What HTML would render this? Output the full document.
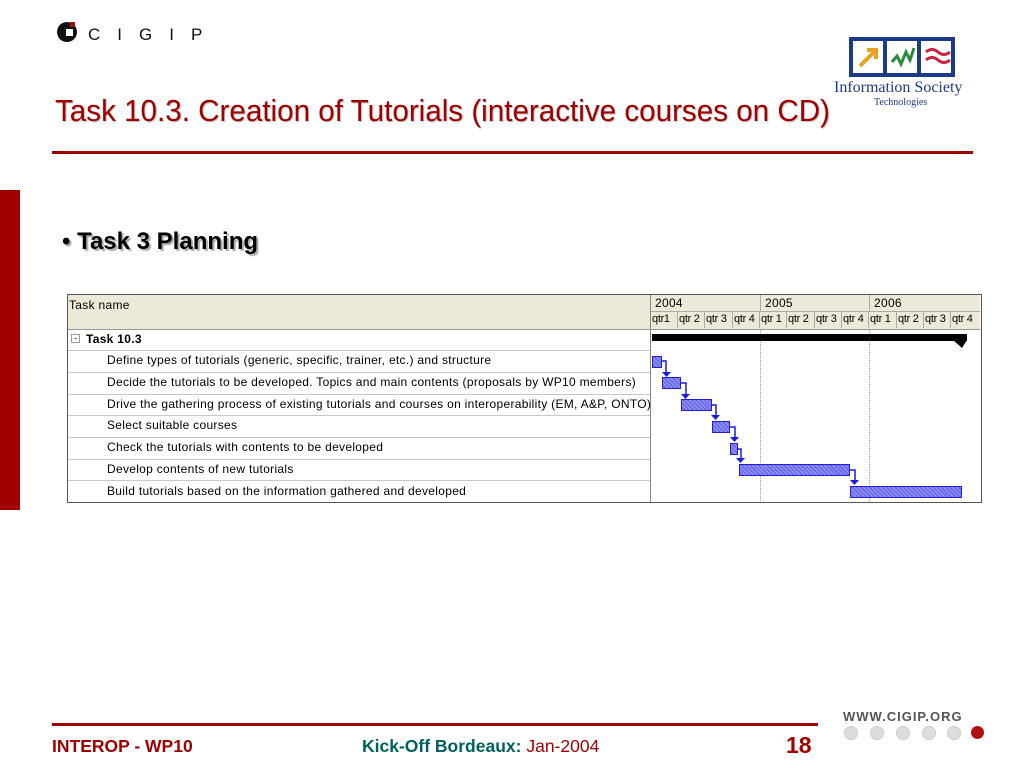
<!DOCTYPE html>
<html><head><meta charset="utf-8"><style>
body{margin:0;width:1024px;height:768px;background:#fff;position:relative;overflow:hidden;font-family:"Liberation Sans",sans-serif}
.a{position:absolute}
.t{font-family:"Liberation Sans",sans-serif;font-size:12px;letter-spacing:0.3px;color:#000;white-space:nowrap}
.q{position:absolute;top:312px;width:26px;height:16px;border-left:1px solid #aaa;font-size:11px;line-height:15px;text-align:left;padding-left:1px;white-space:nowrap;letter-spacing:-0.3px}
.row{position:absolute;left:68px;width:582px;height:21px;border-bottom:1px solid #c8c8c8}
.bar{position:absolute;height:10px;background:#6a6af0;border:1px solid #2020d0;background-image:repeating-linear-gradient(45deg,rgba(255,255,255,.35) 0 1px,transparent 1px 3px)}
</style></head><body>
<div class="a" style="left:57px;top:22px;width:20px;height:20px;border-radius:50%;background:#111"></div>
<div class="a" style="left:66px;top:29px;width:7px;height:7px;background:#fff"></div>
<div class="a" style="left:70px;top:22px;width:5px;height:5px;background:#a01010"></div>
<div class="a" style="left:88px;top:25px;font-size:17px;letter-spacing:17px;color:#111">CIGIP</div>
<svg class="a" style="left:848px;top:36px" width="108" height="44">
<rect x="3" y="3" width="34" height="36" fill="#fff" stroke="#1b3a8a" stroke-width="4"/>
<rect x="37" y="3" width="34" height="36" fill="#fff" stroke="#1b3a8a" stroke-width="4"/>
<rect x="71" y="3" width="34" height="36" fill="#fff" stroke="#1b3a8a" stroke-width="4"/>
<path d="M12 30 L27 15 M19 14 L28 14 L28 23" stroke="#e8a020" stroke-width="4" fill="none"/>
<path d="M44 26 L49 20 L53 28 L58 16 L62 24 L66 12" stroke="#2a8a3a" stroke-width="3" fill="none"/>
<path d="M78 16 q6 -5 12 0 t12 0 M78 24 q6 -5 12 0 t12 0" stroke="#d02040" stroke-width="3" fill="none"/>
</svg>
<div class="a" style="left:834px;top:79px;font-family:'Liberation Serif',serif;font-size:16px;color:#1b3a8a">Information Society</div>
<div class="a" style="left:874px;top:97px;font-family:'Liberation Serif',serif;font-size:10px;color:#1b3a8a">Technologies</div>
<div class="a" style="left:55px;top:93px;font-size:31px;color:#a00000;text-shadow:1px 1px 1px #bbb;white-space:nowrap;transform:scaleX(0.955);transform-origin:0 0">Task 10.3. Creation of Tutorials (interactive courses on CD)</div>
<div class="a" style="left:52px;top:151px;width:921px;height:3px;background:#a00000"></div>
<div class="a" style="left:0;top:190px;width:20px;height:320px;background:#a00000"></div>
<div class="a" style="left:62px;top:228px;font-size:24px;font-weight:bold;color:#000;text-shadow:2px 2px 1px #aaa">• Task 3 Planning</div>
<div class="a" style="left:67px;top:294px;width:913px;height:207px;border:1px solid #555;background:#fff"></div>
<div class="a" style="left:68px;top:295px;width:912px;height:34px;background:#ece9d8;border-bottom:1px solid #999"></div>
<div class="a t" style="left:69px;top:298px">Task name</div>
<div class="a" style="left:650px;top:295px;width:1px;height:207px;background:#888"></div>
<div class="a" style="left:651px;top:311px;width:329px;height:1px;background:#aaa"></div>
<div class="a" style="left:760px;top:295px;width:1px;height:17px;background:#aaa"></div>
<div class="a" style="left:869px;top:295px;width:1px;height:17px;background:#aaa"></div>
<div class="a t" style="left:655px;top:296px">2004</div>
<div class="a t" style="left:765px;top:296px">2005</div>
<div class="a t" style="left:874px;top:296px">2006</div>
<div class="q" style="left:651px;border-left:none">qtr1</div>
<div class="q" style="left:677px">qtr 2</div>
<div class="q" style="left:704px">qtr 3</div>
<div class="q" style="left:732px">qtr 4</div>
<div class="q" style="left:759px">qtr 1</div>
<div class="q" style="left:786px">qtr 2</div>
<div class="q" style="left:814px">qtr 3</div>
<div class="q" style="left:841px">qtr 4</div>
<div class="q" style="left:868px">qtr 1</div>
<div class="q" style="left:896px">qtr 2</div>
<div class="q" style="left:923px">qtr 3</div>
<div class="q" style="left:950px;width:28px">qtr 4</div>
<div class="a" style="left:760px;top:329px;height:172px;border-left:1px dotted #999"></div>
<div class="a" style="left:869px;top:329px;height:172px;border-left:1px dotted #999"></div>
<div class="row" style="top:329px"></div>
<div class="row" style="top:351px"></div>
<div class="row" style="top:373px"></div>
<div class="row" style="top:394px"></div>
<div class="row" style="top:416px"></div>
<div class="row" style="top:438px"></div>
<div class="row" style="top:459px"></div>
<div class="a" style="left:71px;top:334px;width:7px;height:7px;border:1px solid #999;font-size:9px;line-height:6px;text-align:center">-</div>
<div class="a t" style="left:86px;top:332px;font-weight:bold">Task 10.3</div>
<div class="a t" style="left:107px;top:353px">Define types of tutorials (generic, specific, trainer, etc.) and structure</div>
<div class="a t" style="left:107px;top:375px">Decide the tutorials to be developed. Topics and main contents (proposals by WP10 members)</div>
<div class="a t" style="left:107px;top:397px">Drive the gathering process of existing tutorials and courses on interoperability (EM, A&amp;P, ONTO)</div>
<div class="a t" style="left:107px;top:418px">Select suitable courses</div>
<div class="a t" style="left:107px;top:440px">Check the tutorials with contents to be developed</div>
<div class="a t" style="left:107px;top:462px">Develop contents of new tutorials</div>
<div class="a t" style="left:107px;top:484px">Build tutorials based on the information gathered and developed</div>
<div class="a" style="left:652px;top:334px;width:315px;height:7px;background:#000"></div>
<svg class="a" style="left:650px;top:329px" width="330" height="175">
<path d="M303 11 L317 11 L312 19 Z" fill="#000"/>
<g stroke="#1a1ae0" stroke-width="1.5" fill="none">
<path d="M11 32 H16 V44"/><path d="M30 54 H36 V66"/><path d="M61 76 H66 V87"/><path d="M79 98 H85 V109"/><path d="M87 120 H91 V130"/><path d="M199 141 H205 V152"/>
</g>
<g fill="#1a1ae0">
<path d="M12 43 h9 l-4.5 5z"/><path d="M31 65 h9 l-4.5 5z"/><path d="M61 86 h9 l-4.5 5z"/><path d="M80 108 h9 l-4.5 5z"/><path d="M86 129 h9 l-4.5 5z"/><path d="M200 151 h9 l-4.5 5z"/>
</g>
</svg>
<div class="bar" style="left:652px;top:356px;width:8px"></div>
<div class="bar" style="left:662px;top:377px;width:17px"></div>
<div class="bar" style="left:681px;top:399px;width:29px"></div>
<div class="bar" style="left:712px;top:421px;width:16px"></div>
<div class="bar" style="left:730px;top:443px;width:6px"></div>
<div class="bar" style="left:739px;top:464px;width:109px"></div>
<div class="bar" style="left:850px;top:486px;width:110px"></div>
<div class="a" style="left:52px;top:723px;width:766px;height:3px;background:#a00000"></div>
<div class="a" style="left:52px;top:736px;font-size:17.5px;font-weight:bold;color:#a00000">INTEROP - WP10</div>
<div class="a" style="left:362px;top:736px;font-size:17.5px;color:#006060"><b>Kick-Off Bordeaux:</b> <span style="color:#a00000">Jan-2004</span></div>
<div class="a" style="left:786px;top:732px;font-size:23px;font-weight:bold;color:#a00000">18</div>
<div class="a" style="left:843px;top:709px;font-size:13px;font-weight:bold;color:#555;letter-spacing:1px">WWW.CIGIP.ORG</div>
<div class="a" style="left:844px;top:726px;width:12px;height:12px;border-radius:50%;background:#ddd;border:1px solid #ccc"></div>
<div class="a" style="left:870px;top:726px;width:12px;height:12px;border-radius:50%;background:#ddd;border:1px solid #ccc"></div>
<div class="a" style="left:896px;top:726px;width:12px;height:12px;border-radius:50%;background:#ddd;border:1px solid #ccc"></div>
<div class="a" style="left:922px;top:726px;width:12px;height:12px;border-radius:50%;background:#ddd;border:1px solid #ccc"></div>
<div class="a" style="left:947px;top:726px;width:12px;height:12px;border-radius:50%;background:#ddd;border:1px solid #ccc"></div>
<div class="a" style="left:971px;top:726px;width:13px;height:13px;border-radius:50%;background:#b01010"></div>
</body></html>
